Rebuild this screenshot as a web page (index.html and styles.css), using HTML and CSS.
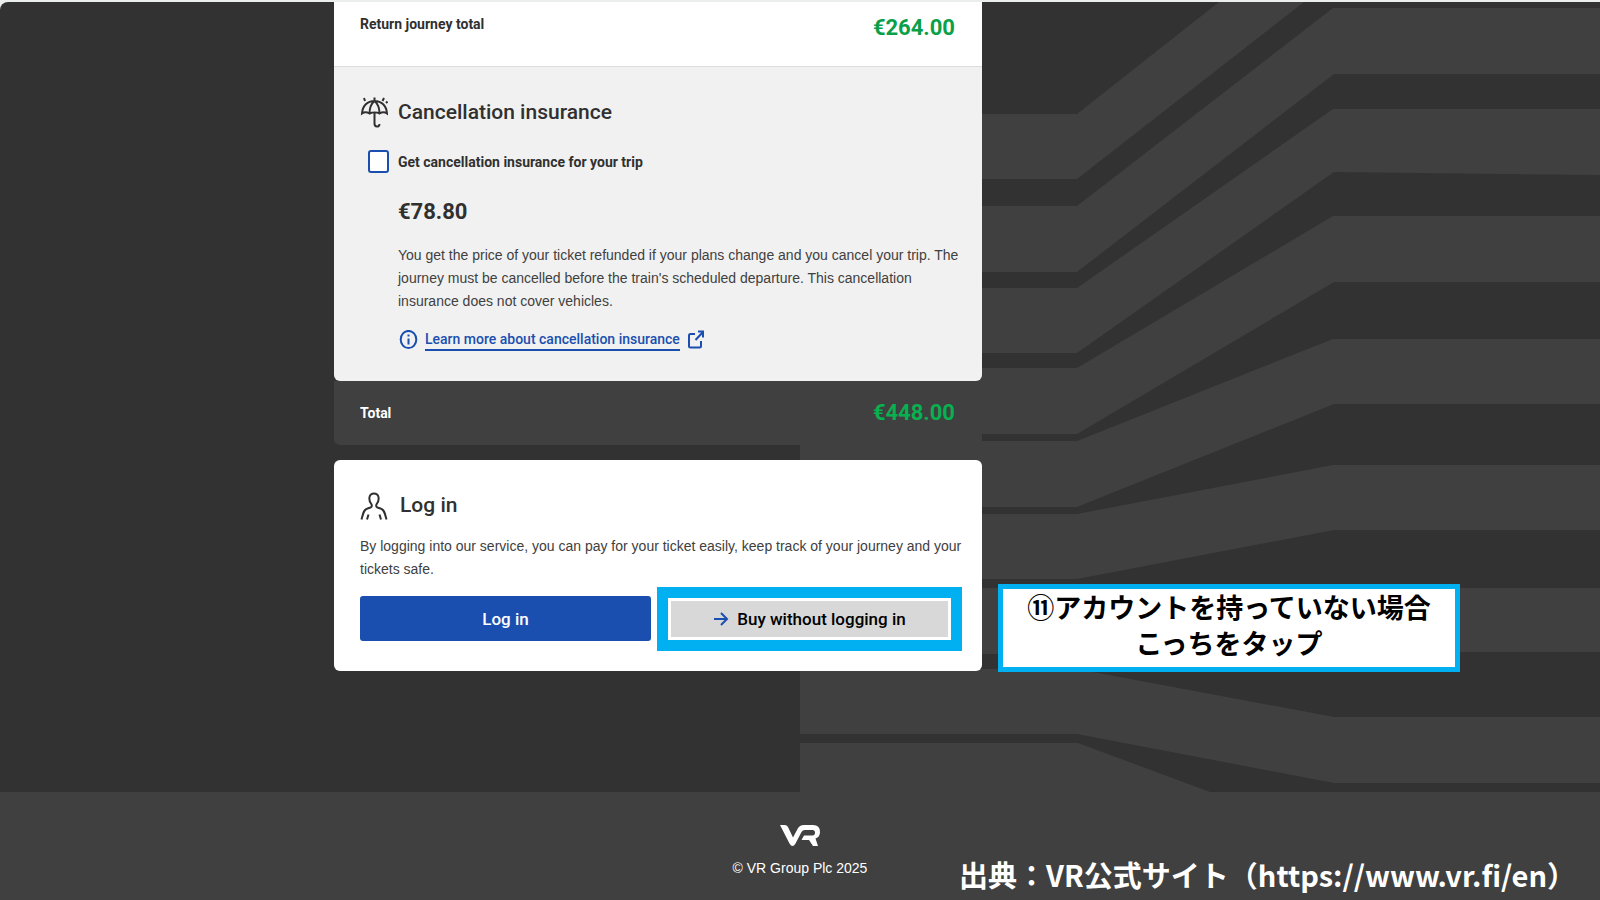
FILE: index.html
```html
<!DOCTYPE html>
<html lang="en">
<head>
    <meta charset="UTF-8">
    <meta name="viewport" content="width=device-width, initial-scale=1.0">
    <title>VR - Checkout</title>
    <link rel="stylesheet" href="styles.css">
</head>
<body>
    <div class="page">
        <svg class="tracks" viewBox="800 2 800 790" preserveAspectRatio="none" aria-hidden="true">
            <path d="M800 114H1077L1219 2H1304L1077 179H800Z"/>
            <path d="M800 206H1077L1333 8H1600V74H1334L1077 272H800Z"/>
            <path d="M800 288H1077L1333 109H1600V175L1334 172L1077 353H800Z"/>
            <path d="M800 368H1077L1333 216H1600V282H1334L1077 434H800Z"/>
            <path d="M800 441H1077L1333 339H1600V404H1334L1077 507H800Z"/>
            <path d="M800 514H1077L1333 465H1600V530H1334L1077 579H800Z"/>
            <path d="M800 588H1600V652H1334L1077 654H800Z"/>
            <path d="M800 669H1077L1334 717H1600V783H1334L1077 734H800Z"/>
            <path d="M800 743H1078L1210 792H800Z"/>
        </svg>

        <main class="checkout">
            <div class="summary">
                <section class="journey-total">
                    <span class="label">Return journey total</span>
                    <span class="price">€264.00</span>
                </section>

                <section class="insurance">
                    <div class="heading">
                        <svg class="heading-icon" viewBox="0 0 28 32" aria-hidden="true">
                            <path d="M2 17.500C2.500 9.500 7.500 5 14.500 5s12 4.500 12.500 12.500c-2-1.500-5-1.500-7.500 0-2.500-1.500-7-1.500-10 0-2.500-1.500-5.500-1.500-7.500 0ZM14.500 1.500v3.500M9.500 17.500C9.500 11 11.500 7.500 14.500 5c3 2.500 5 6 5 12.500M14.500 17v10.500c0 4 5 4 5 .5M4 2l1 3M24 2l-1.500 3M27.500 5.500l-1.500 1.500"/>
                        </svg>
                        <h2>Cancellation insurance</h2>
                    </div>
                    <div class="option">
                        <input type="checkbox" id="insurance">
                        <label class="label" for="insurance">Get cancellation insurance for your trip</label>
                    </div>
                    <div class="details">
                        <p class="price">€78.80</p>
                        <p class="text">You get the price of your ticket refunded if your plans change and you cancel your trip. The journey must be cancelled before the train's scheduled departure. This cancellation insurance does not cover vehicles.</p>
                        <div class="more">
                            <svg class="info-icon" viewBox="0 0 20 20" aria-hidden="true">
                                <ellipse cx="10.500" cy="9.500" rx="7.800" ry="8.600"/>
                                <path d="M10.500 8.500v6M10.500 4.500v2"/>
                            </svg>
                            <a href="#">Learn more about cancellation insurance</a>
                            <svg class="external-icon" viewBox="0 0 20 20" aria-hidden="true">
                                <path d="M8 4H3.500Q2 4 2 5.500v10.500q0 1.500 1.500 1.500h9q1.500 0 1.500-1.500V11M8.500 10L16 2M11 1.500h5v6"/>
                            </svg>
                        </div>
                    </div>
                </section>
            </div>

            <section class="total">
                <span class="label">Total</span>
                <span class="price">€448.00</span>
            </section>

            <section class="login">
                <div class="heading">
                    <svg class="heading-icon" viewBox="0 0 28 32" aria-hidden="true">
                        <path d="M1.500 30.500C3 25 3.500 20.500 7.500 19.500l3-1c2-1 1.500-2.500.5-4C8.500 11 8.500 4.500 14 4.500S19.500 11 17 14.500c-1 1.500-1.500 3 .5 4l3 1c4 1 4.500 5.500 6 11M8.500 25.500l-1.500 5M19.500 25.500l1.500 5"/>
                    </svg>
                    <h2>Log in</h2>
                </div>
                <p class="text">By logging into our service, you can pay for your ticket easily, keep track of your journey and your tickets safe.</p>
                <div class="actions">
                    <button type="button" class="login-button">Log in</button>
                    <button type="button" class="guest-button">
                        <svg class="arrow-icon" viewBox="0 0 16 16" aria-hidden="true">
                            <path d="M1 8h13M8 2l6 6-6 6"/>
                        </svg>
                        Buy without logging in
                    </button>
                </div>
            </section>
        </main>

        <footer class="footer">
            <svg class="logo" viewBox="0 0 40 21" role="img" aria-label="VR">
                <path d="M0 0H4.500Q7 0 8 2L13 12.500 17.500 4Q19.500 0 24 0H33Q40 0 40 7 40 12 35.500 13.500L38 21H33L29 15H21.500L24 10.500H32.500Q35 10.500 35 7.500 35 5 32.500 5H25Q22.500 5 21.500 7L15.500 18.500Q14 21 12.500 21 11 21 9.500 18.500Z"/>
            </svg>
            <p class="text">© VR Group Plc 2025</p>
        </footer>

        <p class="callout" lang="ja">⑪アカウントを持っていない場合<br>こっちをタップ</p>
        <p class="source" lang="ja">出典：VR公式サイト（https://www.vr.fi/en）</p>
    </div>
</body>
</html>
```
FILE: styles.css
```css
* {
    box-sizing: border-box;
}

body {
    margin: 0;
    padding-top: 2px;
    background: #eceeee;
    font-family: Roboto, "Liberation Sans", Arial, sans-serif;
    font-size: 14px;
    color: #303030;
}

h2,
p {
    margin: 0;
}

.page {
    position: relative;
    display: flex;
    flex-direction: column;
    min-height: calc(100vh - 2px);
    background: #323232;
    border-top-left-radius: 8px;
    overflow: hidden;
}

/* Background tracks, behind everything on the right half */
.tracks {
    position: absolute;
    top: 0;
    right: 0;
    width: 50%;
    height: 790px;
    fill: #404040;
}

.checkout {
    position: relative;
    flex: 1;
    width: 100%;
    max-width: 982px;
    padding-left: 334px;
}

.summary {
    border-radius: 0 0 6px 6px;
    overflow: hidden;
}

.journey-total,
.total {
    display: flex;
    justify-content: space-between;
    padding: 0 27px 0 26px;
}

.journey-total {
    height: 65px;
    padding-top: 12px;
    background: #fff;
    border-bottom: 1px solid #dcdcdc;
}

.label {
    font-size: 14px;
    font-weight: 700;
    line-height: 20px;
}

.price {
    font-size: 22px;
    font-weight: 700;
    line-height: 28px;
}

.journey-total .price {
    color: #0a9f48;
}

.insurance {
    padding: 29px 18px 30px 26px;
    background: #f1f1f1;
}

.heading {
    display: flex;
    align-items: center;
    gap: 10px;
}

.heading h2 {
    font-size: 21px;
    font-weight: 500;
    line-height: 32px;
}

.heading-icon {
    width: 28px;
    height: 32px;
    fill: none;
    stroke: #303030;
    stroke-width: 2;
}

.option {
    display: flex;
    align-items: center;
    gap: 9px;
    margin-top: 22px;
    padding-left: 8px;
}

.option input {
    appearance: none;
    width: 21px;
    height: 23px;
    margin: 0;
    background: #fff;
    border: 2px solid #1a4faf;
    border-radius: 3px;
}

.details {
    padding-left: 38px;
}

.details .price {
    margin: 25px 0 18px;
}

.text {
    font-family: "Liberation Sans", Arial, sans-serif;
    font-size: 14px;
    line-height: 23px;
    color: #404040;
}

.more {
    display: flex;
    align-items: center;
    gap: 7px;
    margin-top: 16px;
    line-height: 20px;
}

.more a {
    color: #1a4faf;
    font-weight: 500;
    text-decoration: none;
    border-bottom: 2px solid #1a4faf;
}

.info-icon,
.external-icon {
    width: 20px;
    height: 20px;
    fill: none;
    stroke: #1a4faf;
    stroke-width: 2;
}

.total {
    align-items: center;
    height: 64px;
    background: #404040;
    border-radius: 0 0 6px 6px;
    color: #fff;
}

.total .price {
    color: #08b050;
}

.login {
    margin-top: 15px;
    padding: 29px 18px 30px 26px;
    background: #fff;
    border-radius: 6px;
}

.login .heading {
    gap: 12px;
}

.login .text {
    margin: 14px 0 15px;
}

.actions {
    display: grid;
    grid-template-columns: 291fr 277fr;
    gap: 20px;
    align-items: center;
    padding-right: 16px;
}

.actions button {
    border: 0;
    font-family: inherit;
    font-size: 17px;
    font-weight: 500;
}

.login-button {
    height: 45px;
    background: #1a4faf;
    border-radius: 3px;
    color: #fff;
}

.guest-button {
    display: flex;
    align-items: center;
    justify-content: center;
    gap: 8px;
    height: 36px;
    background: #d8d8d8;
    box-shadow: 0 0 0 3px #fff, 0 0 0 14px #00b0f0;
    color: #000;
}

.arrow-icon {
    width: 16px;
    height: 16px;
    fill: none;
    stroke: #1a4faf;
    stroke-width: 2;
}

.footer {
    position: relative;
    display: flex;
    flex-direction: column;
    align-items: center;
    gap: 11px;
    height: 108px;
    padding-top: 33px;
    background: #404040;
}

.footer .text {
    color: #fff;
}

.logo {
    width: 40px;
    height: 21px;
    fill: #fff;
}

/* Notes laid over the page */
.callout {
    position: absolute;
    top: 582px;
    left: 998px;
    width: 462px;
    height: 88px;
    background: #fff;
    border: 5px solid #00b0f0;
    font-family: "Noto Sans CJK JP", sans-serif;
    font-size: 27px;
    font-weight: 700;
    line-height: 36px;
    color: #000;
    text-align: center;
}

.source {
    position: absolute;
    right: 24px;
    bottom: 8px;
    font-family: "Noto Sans CJK JP", sans-serif;
    font-size: 29px;
    font-weight: 700;
    line-height: 36px;
    color: #fff;
    white-space: nowrap;
}
```
